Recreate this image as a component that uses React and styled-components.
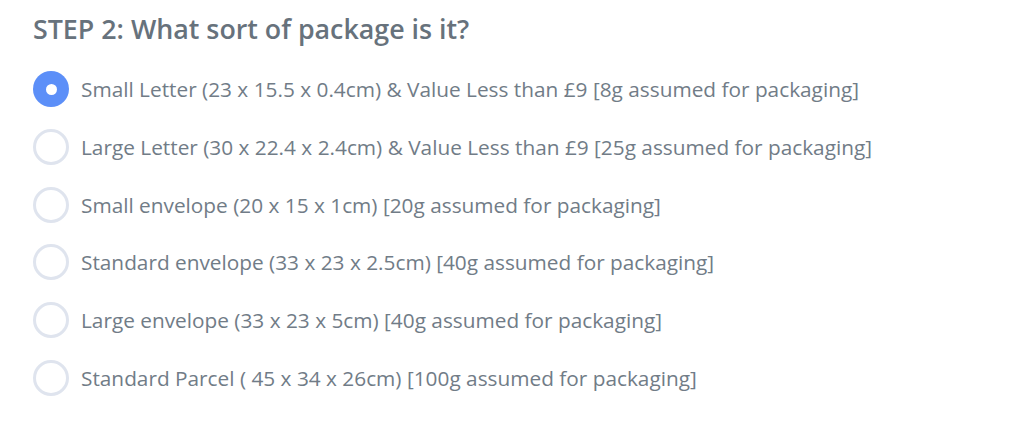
import React, { useState } from "react";
import styled, { createGlobalStyle } from "styled-components";

const Global = createGlobalStyle`
  html, body { margin: 0; padding: 0; background: #ffffff; }
  body { font-family: "Open Sans", sans-serif; -webkit-font-smoothing: antialiased; }
`;

const Page = styled.div`
  padding: 12px 0 0 33px;
`;

const Heading = styled.h2`
  margin: 0 0 25px 0;
  font-family: "Open Sans", sans-serif;
  font-weight: 600;
  font-size: 26.8px;
  line-height: 34px;
  color: #67727c;
`;

const List = styled.div`
  display: flex;
  flex-direction: column;
  gap: 21.8px;
`;

const Row = styled.label`
  display: flex;
  align-items: center;
  gap: 12px;
  cursor: pointer;
  height: 36px;
`;

const Radio = styled.span`
  box-sizing: border-box;
  width: 36px;
  height: 36px;
  border-radius: 50%;
  flex-shrink: 0;
  display: flex;
  align-items: center;
  justify-content: center;
  background: ${(p) => (p.$checked ? "#5c8ff8" : "#ffffff")};
  border: ${(p) => (p.$checked ? "none" : "3px solid #dfe4ee")};
  &::after {
    content: "";
    display: ${(p) => (p.$checked ? "block" : "none")};
    width: 11px;
    height: 11px;
    border-radius: 50%;
    background: #ffffff;
  }
`;

const Label = styled.span`
  font-size: 20.8px;
  color: #717c87;
  font-weight: 400;
  white-space: nowrap;
`;

const options = [
  "Small Letter (23 x 15.5 x 0.4cm) & Value Less than £9 [8g assumed for packaging]",
  "Large Letter (30 x 22.4 x 2.4cm) & Value Less than £9 [25g assumed for packaging]",
  "Small envelope (20 x 15 x 1cm) [20g assumed for packaging]",
  "Standard envelope (33 x 23 x 2.5cm) [40g assumed for packaging]",
  "Large envelope (33 x 23 x 5cm) [40g assumed for packaging]",
  "Standard Parcel ( 45 x 34 x 26cm) [100g assumed for packaging]",
];

export default function App() {
  const [sel, setSel] = useState(0);
  return (
    <>
      <Global />
      <Page>
        <Heading>STEP 2: What sort of package is it?</Heading>
        <List>
          {options.map((o, i) => (
            <Row key={i} onClick={() => setSel(i)}>
              <Radio $checked={sel === i} />
              <Label>{o}</Label>
            </Row>
          ))}
        </List>
      </Page>
    </>
  );
}
